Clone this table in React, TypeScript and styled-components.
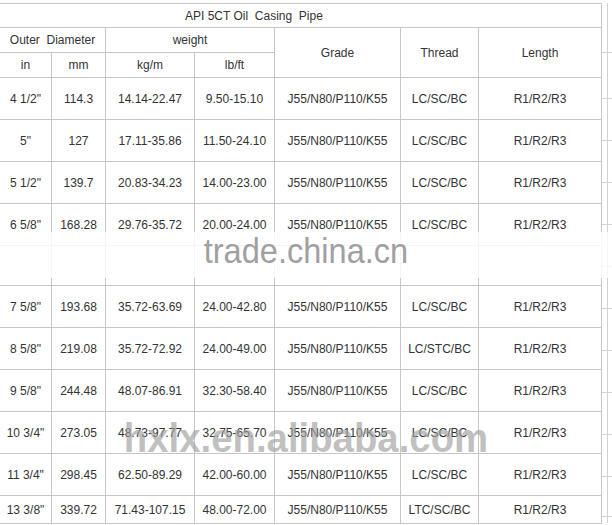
import styled, { createGlobalStyle } from "styled-components";

const GlobalStyle = createGlobalStyle`
  html, body {
    margin: 0;
    padding: 0;
    background: #ffffff;
    overflow: hidden;
  }
  body {
    font-family: "Liberation Sans", Arial, sans-serif;
  }
`;

const GRADE = "J55/N80/P110/K55";
const LENGTH = "R1/R2/R3";

// one entry per body row, null = the empty spacer row
const rows: (string[] | null)[] = [
  ['4 1/2"', "114.3", "14.14-22.47", "9.50-15.10", GRADE, "LC/SC/BC", LENGTH],
  ['5"', "127", "17.11-35.86", "11.50-24.10", GRADE, "LC/SC/BC", LENGTH],
  ['5 1/2"', "139.7", "20.83-34.23", "14.00-23.00", GRADE, "LC/SC/BC", LENGTH],
  ['6 5/8"', "168.28", "29.76-35.72", "20.00-24.00", GRADE, "LC/SC/BC", LENGTH],
  null,
  ['7 5/8"', "193.68", "35.72-63.69", "24.00-42.80", GRADE, "LC/SC/BC", LENGTH],
  ['8 5/8"', "219.08", "35.72-72.92", "24.00-49.00", GRADE, "LC/STC/BC", LENGTH],
  ['9 5/8"', "244.48", "48.07-86.91", "32.30-58.40", GRADE, "LC/SC/BC", LENGTH],
  ['10 3/4"', "273.05", "48.73-97.77", "32.75-65.70", GRADE, "LC/SC/BC", LENGTH],
  ['11 3/4"', "298.45", "62.50-89.29", "42.00-60.00", GRADE, "LC/SC/BC", LENGTH],
  ['13 3/8"', "339.72", "71.43-107.15", "48.00-72.00", GRADE, "LTC/SC/BC", LENGTH],
];

const sideTicks = [52, 98, 140, 182, 224, 266, 308, 350, 392, 434, 476, 516];

const Page = styled.div`
  position: relative;
  width: 612px;
  height: 525px;
  padding-top: 3px;
  box-sizing: border-box;
  display: flex;
  align-items: flex-start;
`;

const SpecGrid = styled.div`
  margin-left: -1px;
  padding: 1px;
  background: #c6c6c6;
  display: grid;
  gap: 1px;
  grid-template-columns: 51px 53px 88px 79px 125px 77px 122px;
  grid-template-rows: 23px 24px 24px 41px 41px 41px 41px 39px 41px 41px 41px 41px 41px 27px;
`;

const Cell = styled.div<{ $col?: string; $row?: string }>`
  background: #ffffff;
  color: #333333;
  font-size: 12px;
  white-space: pre;
  display: flex;
  align-items: center;
  justify-content: center;
  grid-column: ${(p) => p.$col ?? "auto"};
  grid-row: ${(p) => p.$row ?? "auto"};
`;

const TitleCell = styled(Cell)`
  justify-content: flex-start;
  padding-left: 185px;
`;

const SideStrip = styled.div`
  position: relative;
  margin-left: 5px;
  width: 10px;
  height: 520px;
  border-left: 1px solid #d2d2d2;
`;

const SideTick = styled.div`
  position: absolute;
  left: -6px;
  width: 14px;
  height: 1px;
  background: #d4d4d4;
`;

const TradeBand = styled.div`
  position: absolute;
  left: 0;
  right: 0;
  top: 232px;
  height: 46px;
  background: rgba(255, 255, 255, 0.82);
  display: flex;
  justify-content: center;
  align-items: flex-start;
  padding-top: 1px;
  box-sizing: border-box;
`;

const TradeMark = styled.span`
  font-family: "Liberation Sans", Arial, sans-serif;
  font-size: 35px;
  line-height: 35px;
  color: #a0a0a0;
  transform: scaleX(0.93);
`;

const AlibabaMark = styled.div`
  position: absolute;
  left: 0;
  right: 0;
  top: 418px;
  text-align: center;
  font-family: "Liberation Sans", Arial, sans-serif;
  font-weight: 700;
  font-size: 41px;
  line-height: 41px;
  color: rgba(160, 160, 160, 0.66);
  transform: scaleX(0.935);
  pointer-events: none;
`;

export default function App() {
  return (
    <>
      <GlobalStyle />
      <Page>
        <SpecGrid>
          <TitleCell $col="1 / -1">API 5CT Oil  Casing  Pipe</TitleCell>
          <Cell $col="1 / 3">Outer  Diameter</Cell>
          <Cell $col="3 / 5">weight</Cell>
          <Cell $col="5" $row="2 / 4">Grade</Cell>
          <Cell $col="6" $row="2 / 4">Thread</Cell>
          <Cell $col="7" $row="2 / 4">Length</Cell>
          <Cell>in</Cell>
          <Cell>mm</Cell>
          <Cell>kg/m</Cell>
          <Cell>lb/ft</Cell>
          {rows.map((row, i) =>
            row
              ? row.map((v, j) => <Cell key={`${i}-${j}`}>{v}</Cell>)
              : Array.from({ length: 7 }, (_, j) => <Cell key={`${i}-${j}`} />)
          )}
        </SpecGrid>
        <SideStrip>
          {sideTicks.map((y) => (
            <SideTick key={y} style={{ top: y - 3 }} />
          ))}
        </SideStrip>
        <TradeBand>
          <TradeMark>trade.china.cn</TradeMark>
        </TradeBand>
        <AlibabaMark>hxlx.en.alibaba.com</AlibabaMark>
      </Page>
    </>
  );
}
